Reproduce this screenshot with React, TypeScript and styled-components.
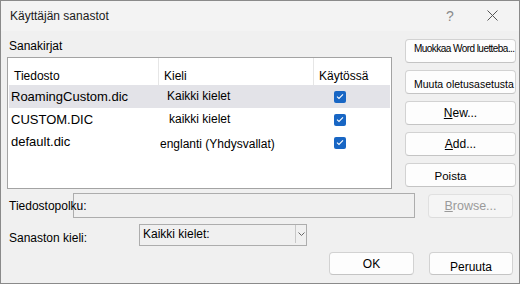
import React from "react";
import styled, { createGlobalStyle } from "styled-components";

const Global = createGlobalStyle`
  html, body { margin: 0; padding: 0; background: #f0f0f0; }
  body { font-family: "Liberation Sans", Arial, sans-serif; color: #000; }
  * { box-sizing: border-box; }
`;

const Window = styled.div`
  width: 520px;
  height: 284px;
  border: 1px solid #8a8a8a;
  background: #f0f0f0;
  display: flex;
  flex-direction: column;
  overflow: hidden;
`;

const TitleBar = styled.div`
  height: 30px;
  flex: none;
  background: #f3f3f3;
  display: flex;
  align-items: center;
  padding: 0 0 1px 9px;
  font-size: 12px;
  color: #1a1a1a;
`;

const TitleText = styled.div`
  flex: 1;
`;

const TitleIcon = styled.div<{ $w: number }>`
  width: ${(p) => p.$w}px;
  display: flex;
  justify-content: center;
  align-items: center;
  color: #8a8a8a;
  font-size: 14px;
`;

const Body = styled.div`
  flex: 1;
  display: flex;
  flex-direction: column;
  padding: 8px 0 0 6px;
`;

const TopSection = styled.div`
  display: flex;
  gap: 13px;
`;

const LeftCol = styled.div`
  width: 385px;
  display: flex;
  flex-direction: column;
`;

const GroupLabel = styled.div`
  font-size: 12px;
  line-height: 14px;
  padding-left: 2px;
  margin-bottom: 4px;
`;

const ListBox = styled.div`
  height: 132px;
  border: 1px solid #a3a3a3;
  background: #fff;
  display: flex;
  flex-direction: column;
`;

const HeaderRow = styled.div`
  display: flex;
  height: 27px;
  font-size: 12px;
`;

const HeaderCell = styled.div<{ $w: number; $first?: boolean }>`
  width: ${(p) => p.$w}px;
  padding: 11px 0 0 ${(p) => (p.$first ? 6 : 5)}px;
  line-height: 14px;
  border-left: ${(p) => (p.$first ? "none" : "1px solid #e6e6e6")};
  white-space: nowrap;
`;

const Rows = styled.div`
  padding: 0 1px;
  display: flex;
  flex-direction: column;
`;

const Row = styled.div<{ $selected?: boolean }>`
  display: flex;
  height: 23px;
  align-items: center;
  background: ${(p) => (p.$selected ? "#e3e3e8" : "transparent")};
`;

const Cell = styled.div<{ $w: number; $pad: number; $size: number; $dy?: number }>`
  width: ${(p) => p.$w}px;
  padding-left: ${(p) => p.$pad}px;
  font-size: ${(p) => p.$size}px;
  line-height: 15px;
  white-space: nowrap;
  display: flex;
  align-items: center;
  transform: translateY(${(p) => p.$dy ?? 0}px);
`;

const CheckBox = styled.span`
  width: 12px;
  height: 12px;
  border-radius: 2px;
  background: #1866c4;
  display: inline-flex;
  align-items: center;
  justify-content: center;
`;

const ButtonCol = styled.div`
  width: 111px;
  display: flex;
  flex-direction: column;
  gap: 7px;
`;

const Button = styled.div<{
  $w?: number;
  $h?: number;
  $align?: "left" | "center";
  $size?: number;
  $pt?: number;
  $pr?: number;
  $ls?: number;
  $disabled?: boolean;
}>`
  width: ${(p) => (p.$w ? `${p.$w}px` : "100%")};
  height: ${(p) => p.$h ?? 24}px;
  background: ${(p) => (p.$disabled ? "#f5f5f5" : "#fdfdfd")};
  border: 1px solid ${(p) => (p.$disabled ? "#e0e0e0" : "#d2d2d2")};
  border-bottom-color: ${(p) => (p.$disabled ? "#dcdcdc" : "#c4c4c4")};
  border-radius: 4px;
  display: flex;
  align-items: center;
  justify-content: ${(p) => (p.$align === "left" ? "flex-start" : "center")};
  padding: ${(p) => p.$pt ?? 0}px ${(p) => p.$pr ?? 0}px 0
    ${(p) => (p.$align === "left" ? 8 : 0)}px;
  font-size: ${(p) => p.$size ?? 12}px;
  letter-spacing: ${(p) => p.$ls ?? 0}px;
  color: ${(p) => (p.$disabled ? "#9a9a9a" : "#000")};
  white-space: nowrap;
  overflow: hidden;
  flex: none;
`;

const RaisedText = styled.span`
  margin-top: -6px;
`;

const FieldRow = styled.div<{ $mt: number }>`
  display: flex;
  align-items: center;
  margin-top: ${(p) => p.$mt}px;
`;

const FieldLabel = styled.div<{ $w: number; $dy?: number }>`
  width: ${(p) => p.$w}px;
  margin-left: 2px;
  font-size: 12px;
  white-space: nowrap;
  flex: none;
  transform: translateY(${(p) => p.$dy ?? 0}px);
`;

const PathInput = styled.div`
  width: 342px;
  height: 25px;
  border: 1px solid #adadad;
  background: transparent;
  flex: none;
`;

const BrowseWrap = styled.div`
  margin-left: 13px;
  margin-top: 1px;
  align-self: flex-start;
`;

const Select = styled.div`
  width: 168px;
  height: 22px;
  border: 1px solid #adadad;
  display: flex;
  align-items: stretch;
  font-size: 12px;
  flex: none;
`;

const SelectValue = styled.div`
  flex: 1;
  padding: 0 0 2px 3px;
  display: flex;
  align-items: center;
`;

const SelectArrow = styled.div`
  width: 11px;
  border-left: 1px solid #c8c8c8;
  margin: 0 0 2px;
  display: flex;
  align-items: center;
  justify-content: center;
`;

const Footer = styled.div`
  display: flex;
  justify-content: flex-end;
  gap: 15px;
  margin-top: 6px;
  padding-right: 6px;
`;

const rows = [
  { file: "RoamingCustom.dic", lang: "Kaikki kielet", pad: 9, dy: 0, fdy: 0, selected: true },
  { file: "CUSTOM.DIC", lang: "kaikki kielet", pad: 11, dy: 0, fdy: 0, selected: false },
  { file: "default.dic", lang: "englanti (Yhdysvallat)", pad: 2, dy: 2, fdy: -1, selected: false },
];

const Check = () => (
  <CheckBox>
    <svg width="8" height="7" viewBox="0 0 8 7">
      <path d="M1 3.6 L3 5.5 L7 1.3" fill="none" stroke="#fff" strokeWidth="1.1" />
    </svg>
  </CheckBox>
);

export default function App() {
  return (
    <>
      <Global />
      <Window>
        <TitleBar>
          <TitleText>Käyttäjän sanastot</TitleText>
          <TitleIcon $w={20}>?</TitleIcon>
          <TitleIcon $w={22} />
          <TitleIcon $w={20}>
            <svg width="11" height="11" viewBox="0 0 11 11">
              <path d="M0.5 0.5 L10.5 10.5 M10.5 0.5 L0.5 10.5" stroke="#555" strokeWidth="1" />
            </svg>
          </TitleIcon>
          <TitleIcon $w={17} />
        </TitleBar>
        <Body>
          <TopSection>
            <LeftCol>
              <GroupLabel>Sanakirjat</GroupLabel>
              <ListBox>
                <HeaderRow>
                  <HeaderCell $w={150} $first>Tiedosto</HeaderCell>
                  <HeaderCell $w={155}>Kieli</HeaderCell>
                  <HeaderCell $w={78}>Käytössä</HeaderCell>
                </HeaderRow>
                <Rows>
                  {rows.map((r) => (
                    <Row key={r.file} $selected={r.selected}>
                      <Cell $w={149} $pad={2} $size={13} $dy={r.fdy}>
                        {r.file}
                      </Cell>
                      <Cell $w={155} $pad={r.pad} $size={12} $dy={r.dy}>
                        {r.lang}
                      </Cell>
                      <Cell $w={77} $pad={21} $size={12}>
                        <Check />
                      </Cell>
                    </Row>
                  ))}
                </Rows>
              </ListBox>
            </LeftCol>
            <ButtonCol>
              <Button $align="left" $size={10} $ls={-0.55}>
                <RaisedText>Muokkaa Word luetteba...</RaisedText>
              </Button>
              <Button $align="left" $size={10.5} $pt={3}>
                Muuta oletusasetusta
              </Button>
              <Button>
                <span>
                  <u>N</u>ew...
                </span>
              </Button>
              <Button>
                <span>
                  <u>A</u>dd...
                </span>
              </Button>
              <Button $pr={20} $size={11.5} $pt={2}>
                Poista
              </Button>
            </ButtonCol>
          </TopSection>
          <FieldRow $mt={4}>
            <FieldLabel $w={64}>Tiedostopolku:</FieldLabel>
            <PathInput />
            <BrowseWrap>
              <Button $w={85} $disabled $size={12.5}>
                <span>
                  <u>B</u>rowse...
                </span>
              </Button>
            </BrowseWrap>
          </FieldRow>
          <FieldRow $mt={6}>
            <FieldLabel $w={130} $dy={3}>
              Sanaston kieli:
            </FieldLabel>
            <Select>
              <SelectValue>Kaikki kielet:</SelectValue>
              <SelectArrow>
                <svg width="7" height="4" viewBox="0 0 7 4">
                  <path d="M0.5 0.5 L3.5 3.5 L6.5 0.5" fill="none" stroke="#666" strokeWidth="1" />
                </svg>
              </SelectArrow>
            </Select>
          </FieldRow>
          <Footer>
            <Button $w={85} $h={23}>
              OK
            </Button>
            <Button $w={84} $h={23} $pt={6}>
              Peruuta
            </Button>
          </Footer>
        </Body>
      </Window>
    </>
  );
}
